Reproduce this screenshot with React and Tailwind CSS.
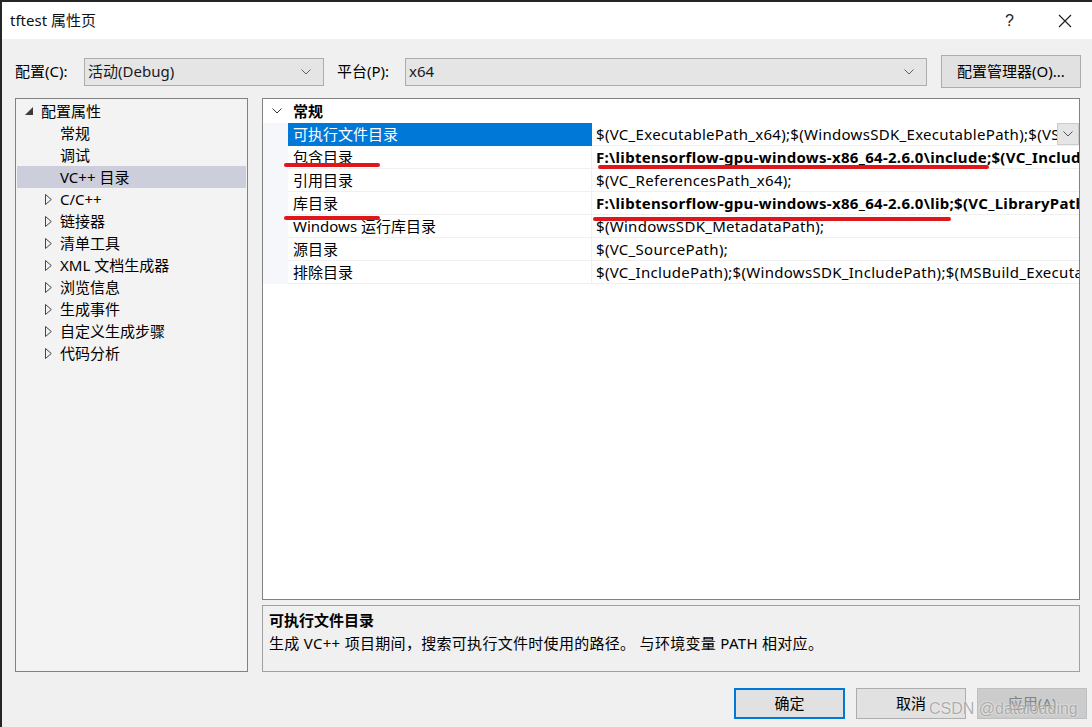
import React from 'react';

const treeItems = [
    { label: '常规', level: 1 },
    { label: '调试', level: 1 },
    { label: 'VC++ 目录', level: 1, selected: true },
    { label: 'C/C++', level: 0 },
    { label: '链接器', level: 0 },
    { label: '清单工具', level: 0 },
    { label: 'XML 文档生成器', level: 0 },
    { label: '浏览信息', level: 0 },
    { label: '生成事件', level: 0 },
    { label: '自定义生成步骤', level: 0 },
    { label: '代码分析', level: 0 },
];

const props = [
    { name: '可执行文件目录', value: '$(VC_ExecutablePath_x64);$(WindowsSDK_ExecutablePath);$(VS', selected: true },
    { name: '包含目录', value: 'F:\\libtensorflow-gpu-windows-x86_64-2.6.0\\include;$(VC_Includ', bold: true },
    { name: '引用目录', value: '$(VC_ReferencesPath_x64);' },
    { name: '库目录', value: 'F:\\libtensorflow-gpu-windows-x86_64-2.6.0\\lib;$(VC_LibraryPath', bold: true },
    { name: 'Windows 运行库目录', value: '$(WindowsSDK_MetadataPath);' },
    { name: '源目录', value: '$(VC_SourcePath);' },
    { name: '排除目录', value: '$(VC_IncludePath);$(WindowsSDK_IncludePath);$(MSBuild_Executa' },
];

function Chevron({ className = '' }) {
    return (
        <svg width="10" height="6" viewBox="0 0 10 6" className={className}>
            <path d="M0.5 0.5 L5 5 L9.5 0.5" fill="none" stroke="currentColor" strokeWidth="1" />
        </svg>
    );
}

function Collapsed() {
    return (
        <svg width="7" height="11" viewBox="0 0 7 11" className="shrink-0">
            <path d="M0.5 0.5 L6.3 5.5 L0.5 10.5 Z" fill="none" stroke="#444" strokeWidth="1" />
        </svg>
    );
}

function Expanded() {
    return (
        <svg width="8" height="8" viewBox="0 0 8 8" className="shrink-0">
            <path d="M8 0 L8 8 L0 8 Z" fill="#3c3c3c" />
        </svg>
    );
}

function SelectBox({ value, width }) {
    return (
        <div className={`${width} shrink-0 h-[28px] flex items-center justify-between bg-[#e5e5e5] border border-[#adadad] pl-[3px] pr-[12px] text-[15px] text-[#1a1a1a]`}>
            <span>{value}</span>
            <Chevron className="text-[#606060]" />
        </div>
    );
}

function RedMark({ className }) {
    return <div className={`absolute h-[4px] rounded-full bg-[#e0161b] ${className}`} />;
}

export default function App() {
    return (
        <div className="relative w-[1092px] h-[727px] overflow-hidden bg-[#f0f0f0] border-l-2 border-t-2 border-[#262626] font-['Segoe_UI','Noto_Sans','Noto_Sans_CJK_SC',sans-serif] text-[15px] text-black">
            {/* title bar */}
            <div className="h-[37px] bg-white flex items-center justify-between pl-[8px] pr-[20px]">
                <span className="text-[15px] text-[#111]">tftest 属性页</span>
                <div className="flex items-center gap-[44px] text-[#222]">
                    <span className="text-[16px] font-['Liberation_Sans',sans-serif]">?</span>
                    <svg width="14" height="14" viewBox="0 0 14 14">
                        <path d="M1 1 L13 13 M13 1 L1 13" stroke="#222" strokeWidth="1.2" />
                    </svg>
                </div>
            </div>

            {/* configuration row */}
            <div className="flex items-center h-[33px] mt-[16px] pl-[13px]">
                <span className="w-[69px] shrink-0">配置(C):</span>
                <SelectBox value="活动(Debug)" width="w-[240px]" />
                <span className="w-[68px] shrink-0 ml-[13px]">平台(P):</span>
                <SelectBox value="x64" width="w-[522px]" />
                <button className="ml-[14px] shrink-0 w-[140px] h-[33px] bg-[#e1e1e1] border border-[#adadad]">配置管理器(O)...</button>
            </div>

            {/* main area */}
            <div className="flex mt-[10px] pl-[13px] pr-[12px] gap-[14px]">
                <div className="w-[233px] shrink-0 h-[574px] bg-[#f3f3f3] border border-[#828282] pt-[1px] px-[1px]">
                    <div className="h-[22px] flex items-center pl-[8px] gap-[8px]">
                        <Expanded />
                        <span>配置属性</span>
                    </div>
                    {treeItems.map((t) => (
                        <div
                            key={t.label}
                            className={`h-[22px] flex items-center gap-[8px] whitespace-nowrap ${t.level === 1 ? 'pl-[43px]' : 'pl-[28px]'} ${t.selected ? 'bg-[#cccedb]' : ''}`}
                        >
                            {t.level === 0 && <Collapsed />}
                            <span>{t.label}</span>
                        </div>
                    ))}
                </div>

                <div className="w-[818px] shrink-0 flex flex-col gap-[5px]">
                    <div className="h-[502px] bg-white border border-[#828282] flex flex-col overflow-hidden">
                        <div className="h-[24px] flex items-center">
                            <div className="w-[25px] flex justify-center pl-[2px]">
                                <Chevron className="text-[#333]" />
                            </div>
                            <span className="pl-[5px] font-bold">常规</span>
                        </div>
                        {props.map((p) => (
                            <div key={p.name} className="h-[23px] flex">
                                <div className="w-[25px] shrink-0 bg-[#f5f7fb]" />
                                <div className={`w-[304px] shrink-0 flex items-center pl-[5px] whitespace-nowrap border-r border-b ${p.selected ? 'bg-[#0078d7] text-white border-[#0078d7]' : 'border-[#f0f0f0]'}`}>
                                    {p.name}
                                </div>
                                <div className="relative flex-1 min-w-0 flex items-center pl-[4px] border-b border-[#f0f0f0] overflow-hidden">
                                    <span className={`whitespace-nowrap tracking-[0.3px] ${p.bold ? 'font-bold' : ''}`}>{p.value}</span>
                                    {p.selected && (
                                        <div className="absolute right-0 top-0 w-[22px] h-[22px] bg-[#e5e5e5] border border-[#cccccc] flex items-center justify-center">
                                            <Chevron className="text-[#555]" />
                                        </div>
                                    )}
                                </div>
                            </div>
                        ))}
                    </div>
                    <div className="h-[67px] border border-[#a0a0a0] bg-[#f0f0f0] pl-[6px] pt-[3px]">
                        <div className="font-bold h-[22px] flex items-center">可执行文件目录</div>
                        <div className="h-[25px] flex items-center tracking-[0.3px]">生成 VC++ 项目期间，搜索可执行文件时使用的路径。 与环境变量 PATH 相对应。</div>
                    </div>
                </div>
            </div>

            {/* buttons */}
            <div className="flex justify-end gap-[11px] mt-[16px] pr-[5px]">
                <button className="w-[111px] h-[31px] bg-[#e1e1e1] border-2 border-[#0078d7]">确定</button>
                <button className="w-[110px] h-[31px] bg-[#e1e1e1] border border-[#adadad]">取消</button>
                <button className="w-[110px] h-[31px] bg-[#cccccc] border border-[#bfbfbf] text-[#838383]">应用(A)</button>
            </div>

            {/* annotations */}
            <RedMark className="left-[282px] top-[161px] w-[96px]" />
            <RedMark className="left-[596px] top-[163px] w-[391px]" />
            <RedMark className="left-[282px] top-[214px] w-[96px]" />
            <RedMark className="left-[591px] top-[215px] w-[358px]" />
            <span className="absolute left-[927px] top-[695px] text-[16px] text-[#9a9a9a]/80 font-['Liberation_Sans',sans-serif] [text-shadow:0_0_2px_#ffffff]">CSDN @dataloading</span>
        </div>
    );
}
